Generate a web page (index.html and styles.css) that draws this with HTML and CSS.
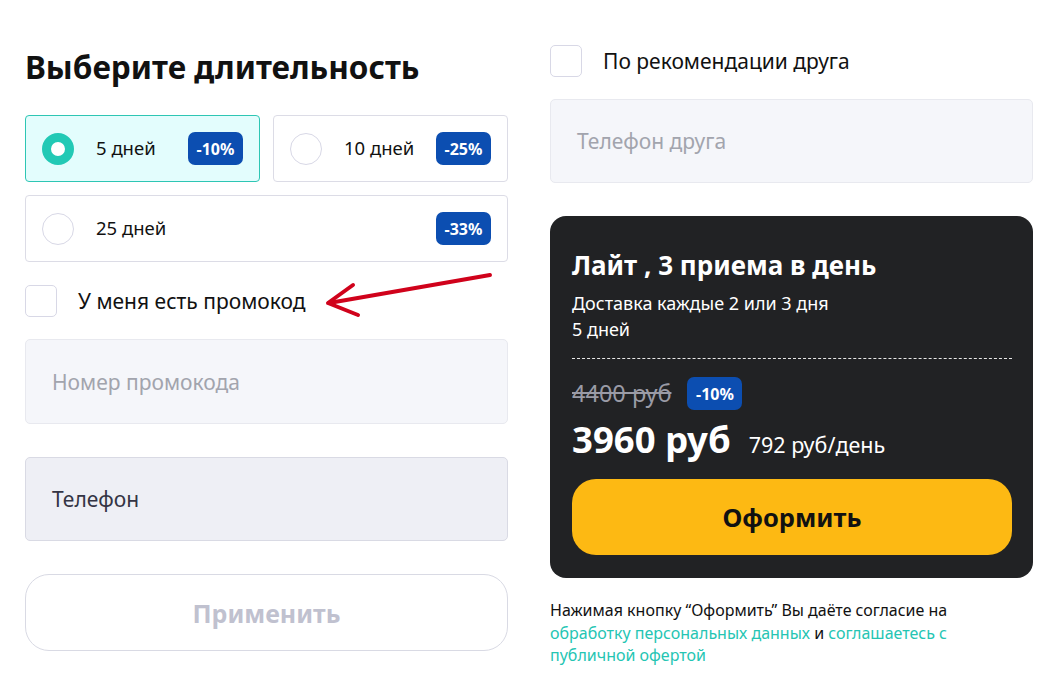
FILE: index.html
```html
<!DOCTYPE html>
<html lang="ru">
<head>
<meta charset="utf-8">
<link rel="stylesheet" href="styles.css">
</head>
<body>
<div class="page">
  <div class="col left">
    <h1 class="title">Выберите длительность</h1>
    <div class="options">
      <div class="opt selected">
        <span class="radio"></span>
        <span class="opt-label">5 дней</span>
        <span class="badge">-10%</span>
      </div>
      <div class="opt">
        <span class="radio"></span>
        <span class="opt-label">10 дней</span>
        <span class="badge">-25%</span>
      </div>
      <div class="opt wide">
        <span class="radio"></span>
        <span class="opt-label">25 дней</span>
        <span class="badge">-33%</span>
      </div>
    </div>
    <div class="check promo">
      <span class="box"></span>
      <span class="check-label">У меня есть промокод</span>
      <svg class="arrow" width="180" height="60" viewBox="0 0 180 60">
        <path d="M170 10 L9 38" stroke="#d0021b" stroke-width="4" fill="none" stroke-linecap="round"/>
        <path d="M33 20 L8 38 L38 50" stroke="#d0021b" stroke-width="4" fill="none" stroke-linecap="round" stroke-linejoin="round"/>
      </svg>
    </div>
    <div class="field light">Номер промокода</div>
    <div class="field grey">Телефон</div>
    <div class="apply">Применить</div>
  </div>
  <div class="col right">
    <div class="check friend">
      <span class="box"></span>
      <span class="check-label">По рекомендации друга</span>
    </div>
    <div class="field light friend-field">Телефон друга</div>
    <div class="card">
      <div class="card-title">Лайт , 3 приема в день</div>
      <div class="card-sub">Доставка каждые 2 или 3 дня</div>
      <div class="card-sub">5 дней</div>
      <div class="dash"></div>
      <div class="old-row">
        <span class="old">4400 руб</span>
        <span class="badge">-10%</span>
      </div>
      <div class="price-row">
        <span class="price">3960 руб</span>
        <span class="per">792 руб/день</span>
      </div>
      <div class="order">Оформить</div>
    </div>
    <div class="note">
      <div>Нажимая кнопку “Оформить” Вы даёте согласие на</div>
      <div><span class="lnk">обработку персональных данных</span> и <span class="lnk">соглашаетесь с</span></div>
      <div><span class="lnk">публичной офертой</span></div>
    </div>
  </div>
</div>
</body>
</html>
```
FILE: styles.css
```css
* { box-sizing: border-box; }
body {
  margin: 0;
  background: #fff;
  font-family: "Noto Sans", "Open Sans", sans-serif;
  color: #111;
}
.page {
  display: flex;
  gap: 42px;
  padding: 0 31px 0 25px;
}
.col { width: 483px; display: flex; flex-direction: column; }
.title {
  margin: 47px 0 0;
  font-size: 31.5px;
  line-height: 40px;
  font-weight: 700;
  color: #111;
}
.options {
  margin-top: 28px;
  display: grid;
  grid-template-columns: 1fr 1fr;
  gap: 13px;
}
.opt {
  height: 67px;
  border: 1px solid #dcdce6;
  border-radius: 4px;
  display: flex;
  align-items: center;
  padding: 0 16px 0 16px;
  background: #fff;
}
.opt.wide { grid-column: 1 / 3; }
.opt.selected { background: #e3fdfd; border-color: #2ec6b4; }
.radio {
  width: 32px; height: 32px;
  border-radius: 50%;
  border: 1px solid #d8d8e6;
  flex: none;
}
.selected .radio { border: 9px solid #22c9b5; background: #fff; }
.opt-label { margin-left: 22px; font-size: 18.5px; line-height: 24px; padding-bottom: 2px; flex: 1; }
.badge {
  background: #0c4eb1;
  color: #fff;
  font-weight: 700;
  font-size: 16px;
  border-radius: 7px;
  width: 55px; height: 33px;
  display: flex; align-items: center; justify-content: center;
  flex: none;
}
.check { display: flex; align-items: center; position: relative; }
.box {
  width: 32px; height: 32px;
  border: 1px solid #d8d8e6;
  border-radius: 5px;
  flex: none;
}
.check-label { margin-left: 21px; font-size: 21px; color: #111; }
.promo { margin-top: 23px; }
.arrow { position: absolute; left: 295px; top: -20px; }
.field {
  height: 85px;
  border-radius: 5px;
  display: flex; align-items: center;
  padding-left: 26px;
  font-size: 21px;
}
.field.light { background: #f5f6fa; border: 1px solid #e8e9ef; color: #a2a4ad; margin-top: 22px; }
.field.grey { background: #eeeff5; border: 1px solid #d9dae4; color: #343444; margin-top: 33px; height: 84px; }
.apply {
  margin-top: 33px;
  height: 77px;
  border: 1px solid #d9dae4;
  border-radius: 24px;
  display: flex; align-items: center; justify-content: center;
  font-weight: 700; font-size: 25px; color: #c0c1cf;
}
.friend { margin-top: 45px; }
.friend-field { color: #c8c9d6; margin-top: 22px; height: 84px; }
.card {
  margin-top: 33px;
  background: #212224;
  border-radius: 16px;
  padding: 32px 21px 23px 22px;
  color: #fff;
}
.card-title { font-size: 26px; font-weight: 700; line-height: 34px; }
.card-sub { font-size: 18px; line-height: 26px; }
.card-title + .card-sub { margin-top: 8px; }
.dash { border-top: 1px dashed #e8e8e8; margin-top: 16px; }
.old-row { display: flex; align-items: center; margin-top: 18px; gap: 16px; height: 33px; }
.old { font-size: 23.5px; color: #9a9ba6; text-decoration: line-through; line-height: 33px; }
.price-row { display: flex; align-items: baseline; margin-top: 7px; gap: 18px; height: 44px; }
.price { font-size: 36.5px; font-weight: 700; line-height: 44px; }
.per { font-size: 21.5px; }
.order {
  margin-top: 18px;
  height: 76px;
  background: #fdb913;
  border-radius: 24px;
  display: flex; align-items: center; justify-content: center;
  font-size: 25.5px; font-weight: 700; color: #111;
}
.note {
  margin: 21px 0 0;
  font-size: 16px;
  line-height: 22.5px;
  color: #111;
}
.lnk { color: #25c5b3; }
```
